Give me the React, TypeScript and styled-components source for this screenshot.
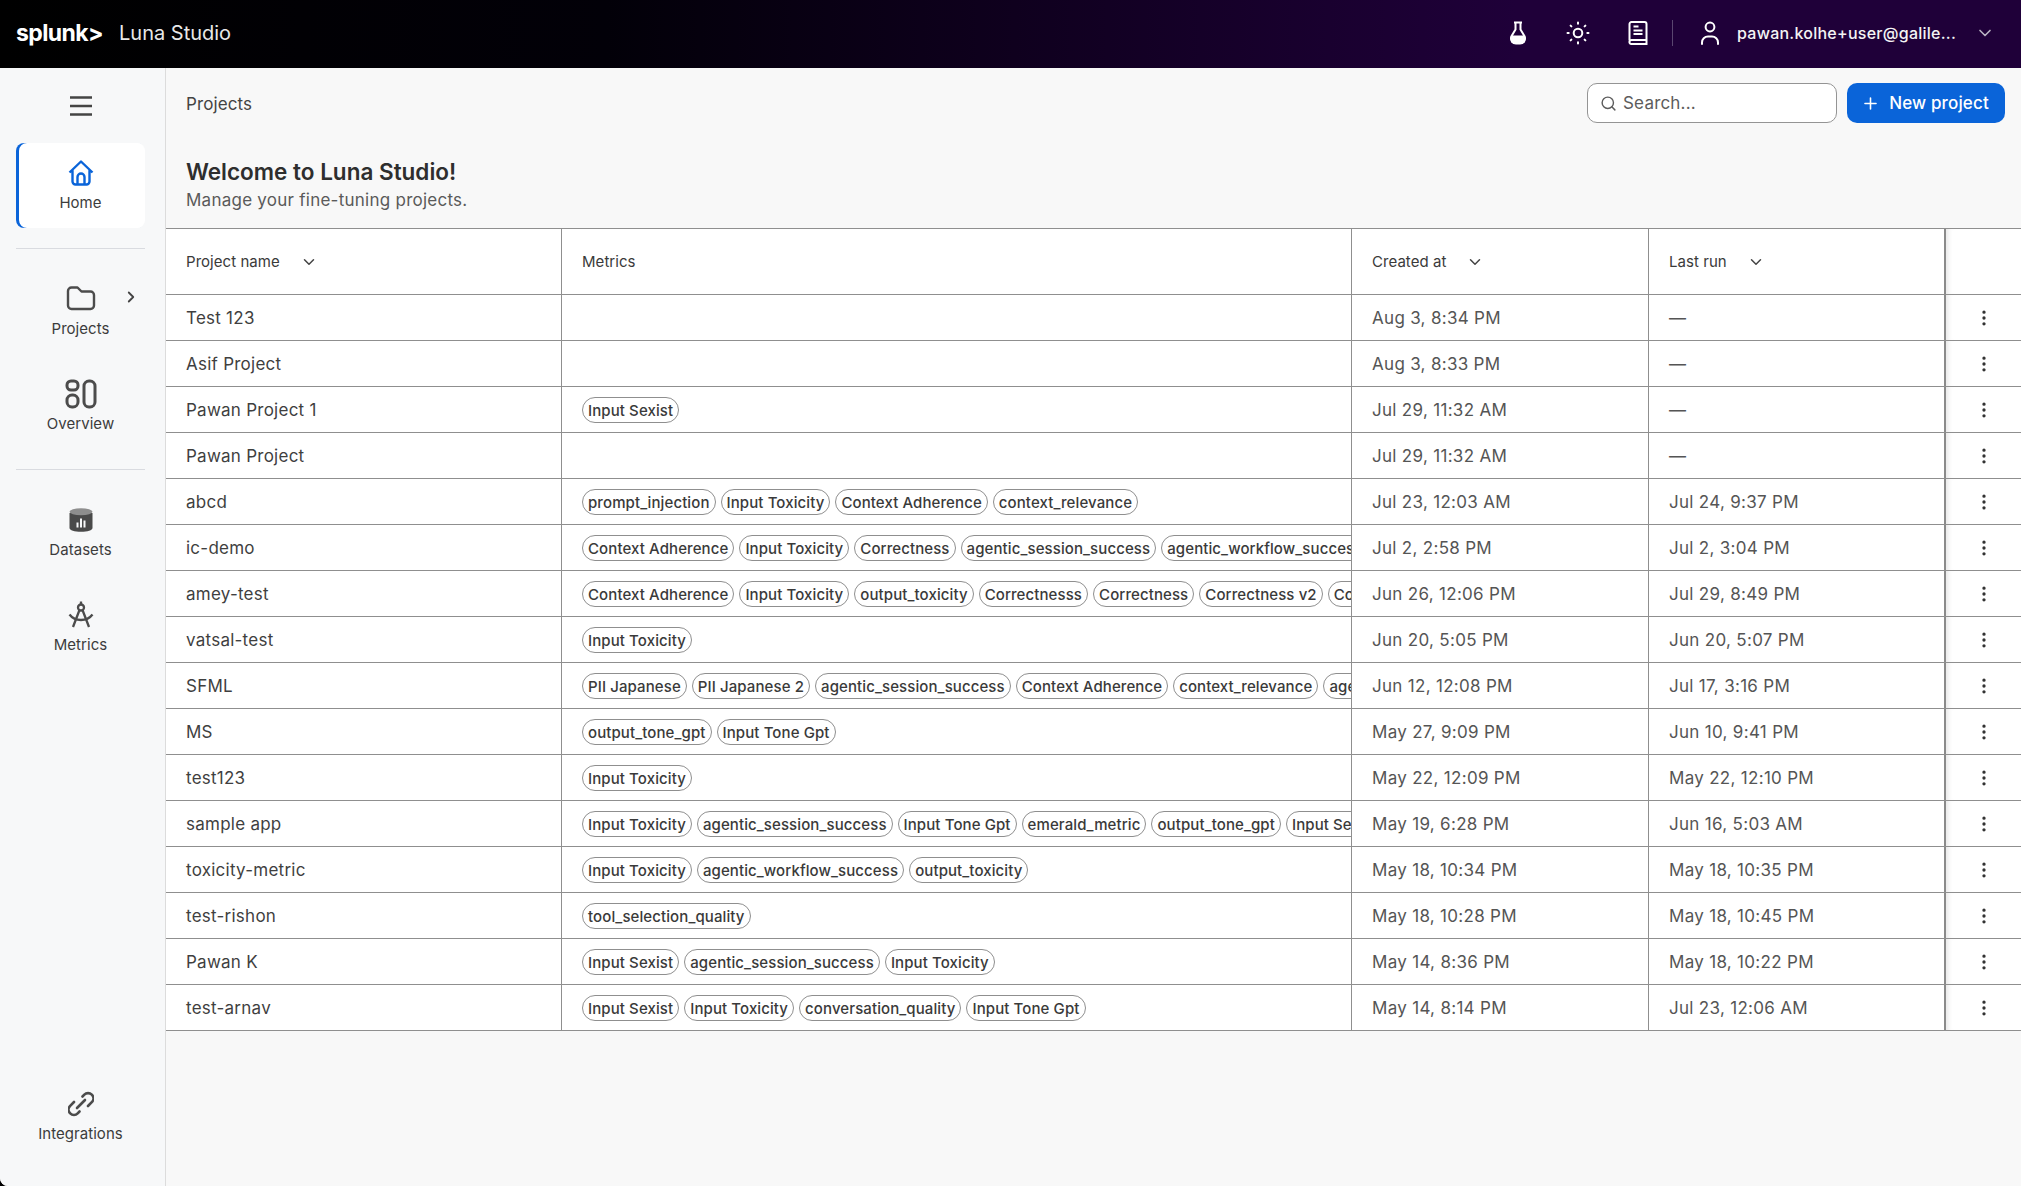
import styled, { createGlobalStyle } from 'styled-components';
import { ChevronDown, ChevronRight, EllipsisVertical, Plus, Search } from 'lucide-react';

type Row = { name: string; metrics: string[]; created: string; lastRun: string };

const rows: Row[] = [
  { name: 'Test 123', metrics: [], created: 'Aug 3, 8:34 PM', lastRun: '—' },
  { name: 'Asif Project', metrics: [], created: 'Aug 3, 8:33 PM', lastRun: '—' },
  { name: 'Pawan Project 1', metrics: ['Input Sexist'], created: 'Jul 29, 11:32 AM', lastRun: '—' },
  { name: 'Pawan Project', metrics: [], created: 'Jul 29, 11:32 AM', lastRun: '—' },
  {
    name: 'abcd',
    metrics: ['prompt_injection', 'Input Toxicity', 'Context Adherence', 'context_relevance'],
    created: 'Jul 23, 12:03 AM',
    lastRun: 'Jul 24, 9:37 PM',
  },
  {
    name: 'ic-demo',
    metrics: ['Context Adherence', 'Input Toxicity', 'Correctness', 'agentic_session_success', 'agentic_workflow_success'],
    created: 'Jul 2, 2:58 PM',
    lastRun: 'Jul 2, 3:04 PM',
  },
  {
    name: 'amey-test',
    metrics: ['Context Adherence', 'Input Toxicity', 'output_toxicity', 'Correctnesss', 'Correctness', 'Correctness v2', 'Correctness v3'],
    created: 'Jun 26, 12:06 PM',
    lastRun: 'Jul 29, 8:49 PM',
  },
  { name: 'vatsal-test', metrics: ['Input Toxicity'], created: 'Jun 20, 5:05 PM', lastRun: 'Jun 20, 5:07 PM' },
  {
    name: 'SFML',
    metrics: ['PII Japanese', 'PII Japanese 2', 'agentic_session_success', 'Context Adherence', 'context_relevance', 'agentic_workflow_success'],
    created: 'Jun 12, 12:08 PM',
    lastRun: 'Jul 17, 3:16 PM',
  },
  { name: 'MS', metrics: ['output_tone_gpt', 'Input Tone Gpt'], created: 'May 27, 9:09 PM', lastRun: 'Jun 10, 9:41 PM' },
  { name: 'test123', metrics: ['Input Toxicity'], created: 'May 22, 12:09 PM', lastRun: 'May 22, 12:10 PM' },
  {
    name: 'sample app',
    metrics: ['Input Toxicity', 'agentic_session_success', 'Input Tone Gpt', 'emerald_metric', 'output_tone_gpt', 'Input Sexist'],
    created: 'May 19, 6:28 PM',
    lastRun: 'Jun 16, 5:03 AM',
  },
  {
    name: 'toxicity-metric',
    metrics: ['Input Toxicity', 'agentic_workflow_success', 'output_toxicity'],
    created: 'May 18, 10:34 PM',
    lastRun: 'May 18, 10:35 PM',
  },
  { name: 'test-rishon', metrics: ['tool_selection_quality'], created: 'May 18, 10:28 PM', lastRun: 'May 18, 10:45 PM' },
  {
    name: 'Pawan K',
    metrics: ['Input Sexist', 'agentic_session_success', 'Input Toxicity'],
    created: 'May 14, 8:36 PM',
    lastRun: 'May 18, 10:22 PM',
  },
  {
    name: 'test-arnav',
    metrics: ['Input Sexist', 'Input Toxicity', 'conversation_quality', 'Input Tone Gpt'],
    created: 'May 14, 8:14 PM',
    lastRun: 'Jul 23, 12:06 AM',
  },
];

const GlobalStyle = createGlobalStyle`
  html, body {
    margin: 0;
    padding: 0;
    height: 100%;
    overflow: hidden;
  }
  body {
    font-family: Inter, "Liberation Sans", sans-serif;
    background: #000;
    color: #333;
  }
  * {
    box-sizing: border-box;
  }
`;

const Shell = styled.div`
  display: flex;
  flex-direction: column;
  height: 100vh;
`;

const TopBar = styled.header`
  flex: 0 0 68px;
  display: flex;
  align-items: center;
  padding: 0 26px 2px 16px;
  background: linear-gradient(90deg, #000 0%, #020008 30%, #1f0039 75%, #1f0039 100%);
  color: #fff;
`;

const Logo = styled.span`
  font-size: 23px;
  font-weight: 700;
  letter-spacing: -0.6px;
  margin-right: 16px;
`;

const Product = styled.span`
  font-size: 20px;
  color: #e8e8e8;
  flex: 1;
`;

const BarIcon = styled.span`
  display: flex;
  width: 24px;
  height: 24px;
  margin-left: 36px;
  &:first-of-type {
    margin-left: 0;
  }
`;

const BarDivider = styled.span`
  width: 1px;
  height: 26px;
  margin: 0 25px 0 22px;
  background: #5a4670;
`;

const UserIcon = styled.span`
  display: flex;
  width: 24px;
  height: 24px;
  margin-right: 15px;
`;

const UserName = styled.span`
  font-size: 16px;
  font-weight: 500;
  letter-spacing: 0.25px;
  width: 238px;
  color: #f4f4f4;
`;

const Body = styled.div`
  flex: 1;
  display: flex;
  min-height: 0;
  background: #f8f8f8;
  border-bottom-left-radius: 8px;
`;

const Sidebar = styled.nav`
  flex: 0 0 166px;
  display: flex;
  flex-direction: column;
  padding: 0 20px 27px 16px;
  background: #f7f8f9;
  border-right: 1px solid #dcdcdc;
  border-bottom-left-radius: 8px;
`;

const Burger = styled.button`
  flex: 0 0 75px;
  display: flex;
  align-items: center;
  justify-content: center;
  padding: 0;
  border: 0;
  background: none;
`;

const NavItem = styled.a<{ $active?: boolean }>`
  position: relative;
  flex: 0 0 85px;
  display: flex;
  flex-direction: column;
  align-items: center;
  justify-content: center;
  gap: 5px;
  margin-bottom: 10px;
  padding-bottom: 2px;
  border-radius: 8px;
  color: ${(p) => (p.$active ? '#0a64d9' : '#4c4c4c')};
  background: ${(p) => (p.$active ? '#fff' : 'transparent')};
  box-shadow: ${(p) => (p.$active ? 'inset 3px 0 0 #0a64d9' : 'none')};
`;

const BottomItem = styled(NavItem)`
  margin: auto 0 0;
`;

const NavLabel = styled.span`
  font-size: 15px;
  line-height: 19px;
  letter-spacing: 0.05px;
  color: #3c3c3c;
`;

const NavIcon = styled.span`
  display: flex;
  align-items: center;
  justify-content: center;
  height: 30px;
`;

const Expand = styled.span`
  position: absolute;
  top: 19px;
  right: 5px;
  display: flex;
  color: #444;
`;

const Divider = styled.hr`
  flex: 0 0 1px;
  width: 100%;
  margin: 10px 0 20px;
  border: 0;
  background: #d9dbe0;
`;

const Main = styled.main`
  flex: 1;
  min-width: 0;
`;

const Toolbar = styled.div`
  display: flex;
  align-items: center;
  height: 70px;
  padding: 0 16px 0 20px;
`;

const Crumb = styled.span`
  flex: 1;
  padding-top: 1px;
  font-size: 17px;
  letter-spacing: 0.1px;
  color: #444;
`;

const SearchBox = styled.div`
  display: flex;
  align-items: center;
  gap: 6px;
  width: 250px;
  height: 40px;
  margin-right: 10px;
  padding: 0 12px;
  font-size: 17px;
  letter-spacing: 0.2px;
  color: #5c5c5c;
  background: #fff;
  border: 1px solid #949494;
  border-radius: 10px;
`;

const NewButton = styled.button`
  display: flex;
  align-items: center;
  justify-content: center;
  gap: 9px;
  width: 158px;
  height: 40px;
  padding: 0 2px 0 0;
  font: 500 17px Inter, sans-serif;
  letter-spacing: 0.15px;
  color: #fff;
  background: #0a64d9;
  border: 0;
  border-radius: 10px;
`;

const Heading = styled.div`
  height: 90px;
  padding: 20px 20px 0;
`;

const Title = styled.h1`
  margin: 0;
  font-size: 22.5px;
  line-height: 28px;
  font-weight: 600;
  color: #2e2e2e;
`;

const Subtitle = styled.p`
  margin: 2px 0 0;
  font-size: 17px;
  line-height: 24px;
  letter-spacing: 0.25px;
  color: #5a5a5a;
`;

const Table = styled.div`
  border-top: 1px solid #8f8f8f;
  background: #fff;
`;

const TableRow = styled.div<{ $head?: boolean }>`
  display: grid;
  grid-template-columns: 395px 790px 297px 296px 77px;
  height: ${(p) => (p.$head ? '66px' : '46px')};
  border-bottom: 1px solid #8f8f8f;
`;

const Cell = styled.div`
  display: flex;
  align-items: center;
  min-width: 0;
  overflow: hidden;
  padding: 0 20px;
  font-size: 17px;
  letter-spacing: 0.25px;
  color: #3f3f3f;
  & + & {
    border-left: 1px solid #8f8f8f;
  }
`;

const DateCell = styled(Cell)`
  letter-spacing: 0.3px;
  color: #555;
`;

const HeadLabel = styled.span`
  font-size: 15px;
  letter-spacing: 0.05px;
  color: #3a3a3a;
`;

const SortIcon = styled.span`
  display: flex;
  margin-left: 20px;
  color: #444;
`;

const ActionCell = styled(Cell)`
  justify-content: center;
  padding: 0;
  color: #333;
  && {
    border-left: 2px solid #8a8a8a;
  }
  box-shadow: inset 6px 0 5px -4px rgba(0, 0, 0, 0.1);
`;

const ChipRow = styled.div`
  display: flex;
  gap: 5px;
  padding-top: 1px;
`;

const Chip = styled.span`
  flex: none;
  display: flex;
  align-items: center;
  height: 26px;
  padding: 0 5px;
  font-size: 15px;
  font-weight: 500;
  letter-spacing: 0.1px;
  color: #3a3a3a;
  background: #fff;
  border: 1px solid #8f8f8f;
  border-radius: 13px;
`;

function FlaskIcon() {
  return (
    <svg width="24" height="24" viewBox="0 0 24 24" fill="none" stroke="currentColor" strokeWidth="2">
      <path d="M8 1.5h8M9.5 2v6.5L5.6 15a5.2 5.2 0 0 0 4.4 7.5h4a5.2 5.2 0 0 0 4.4-7.5L14.5 8.5V2" />
      <path d="M5 14.5h14l.8 3-1 4-2.8 1.5H8l-2.8-1.5-1-4z" fill="currentColor" stroke="none" />
    </svg>
  );
}

function SunIcon() {
  return (
    <svg width="24" height="24" viewBox="0 0 24 24" fill="none" stroke="currentColor" strokeWidth="2" strokeLinecap="round">
      <circle cx="12" cy="12" r="4.3" />
      <path d="M12 1.5v1.2M12 21.3v1.2M1.5 12h1.2M21.3 12h1.2M4.6 4.6l.8.8M18.6 18.6l.8.8M4.6 19.4l.8-.8M18.6 5.4l.8-.8" />
    </svg>
  );
}

function BookIcon() {
  return (
    <svg width="24" height="24" viewBox="0 0 24 24" fill="none" stroke="currentColor" strokeWidth="2">
      <path d="M3.500 19.500V3a2 2 0 0 1 2-2h13a2 2 0 0 1 2 2v20H5.500a2 2 0 0 1-2-2.500 2 2 0 0 1 2-1.500h15" />
      <path d="M7.500 5.500h5M7.500 9.500h9M7.500 13h9" strokeWidth="1.8" />
    </svg>
  );
}

function PersonIcon() {
  return (
    <svg width="24" height="24" viewBox="0 0 24 24" fill="none" stroke="currentColor" strokeWidth="2" strokeLinecap="round">
      <circle cx="12" cy="6" r="4.4" />
      <path d="M4 23v-1.5a6 6 0 0 1 6-6h4a6 6 0 0 1 6 6V23" />
    </svg>
  );
}

function BurgerIcon() {
  return (
    <svg width="24" height="20" viewBox="0 0 24 20" fill="none" stroke="#444" strokeWidth="2.6">
      <path d="M1 1.500h22M1 10h22M1 18.500h22" />
    </svg>
  );
}

function HomeIcon() {
  return (
    <svg width="26" height="26" viewBox="0 0 26 26" fill="none" stroke="currentColor" strokeWidth="2.4" strokeLinejoin="round">
      <path d="M1.500 12.500 13 1.500l11.500 11M4.500 10v11.500a3 3 0 0 0 3 3h11a3 3 0 0 0 3-3V10" />
      <path d="M9.500 24.500V17a3.500 3.500 0 0 1 7 0v7.500" />
    </svg>
  );
}

function FolderIcon() {
  return (
    <svg width="30" height="25" viewBox="0 0 30 25" fill="none" stroke="currentColor" strokeWidth="2.4" strokeLinejoin="round">
      <path d="M2 5a3.500 3.500 0 0 1 3.500-3.500h6l4 4H24.500A3.500 3.500 0 0 1 28 9v10.500a3.500 3.500 0 0 1-3.500 3.500h-19A3.500 3.500 0 0 1 2 19.500z" />
    </svg>
  );
}

function OverviewIcon() {
  return (
    <svg width="32" height="30" viewBox="0 0 32 30" fill="none" stroke="currentColor" strokeWidth="3">
      <rect x="2" y="2" width="11" height="9" rx="4" />
      <rect x="2" y="16" width="11" height="12" rx="5" />
      <rect x="19" y="2" width="11" height="26" rx="5" />
    </svg>
  );
}

function DatasetIcon() {
  return (
    <svg width="24" height="24" viewBox="0 0 24 24">
      <path d="M0.500 5v15c0 2.200 5 3.800 11.500 3.800S23.500 22.200 23.500 20V5z" fill="#4a4a4a" />
      <ellipse cx="12" cy="3.800" rx="11.500" ry="3.500" fill="#8e8e8e" />
      <path d="M7.500 14.500h2v5h-2zM11 10.500h2v9h-2zM14.500 12.500h2v7h-2z" fill="#f7f8f9" />
    </svg>
  );
}

function CompassIcon() {
  return (
    <svg width="26" height="27" viewBox="0 0 26 27" fill="none" stroke="currentColor" strokeWidth="2.3">
      <path d="M13 0.500v3" />
      <circle cx="13" cy="6.500" r="3" />
      <path d="M11.500 9 5 26M14.500 9 21 26" />
      <path d="M1.500 13.500c3 4 6.500 5.500 11.500 5.500s8.500-1.500 11.500-5.500" />
    </svg>
  );
}

function LinkIcon() {
  return (
    <svg width="26" height="26" viewBox="0 0 26 26" fill="none" stroke="currentColor" strokeWidth="2.600" strokeLinecap="round">
      <path d="M14.500 5.500l1.800-1.800a5.300 5.300 0 0 1 7.500 7.500L20 15" />
      <path d="M11.500 20.500l-1.800 1.800a5.300 5.300 0 0 1-7.500-7.500L6 11" />
      <path d="M9 17l8-8" />
    </svg>
  );
}

export default function App() {
  return (
    <Shell>
      <GlobalStyle />
      <TopBar>
        <Logo>splunk&gt;</Logo>
        <Product>Luna Studio</Product>
        <BarIcon>
          <FlaskIcon />
        </BarIcon>
        <BarIcon>
          <SunIcon />
        </BarIcon>
        <BarIcon>
          <BookIcon />
        </BarIcon>
        <BarDivider />
        <UserIcon>
          <PersonIcon />
        </UserIcon>
        <UserName>pawan.kolhe+user@galile...</UserName>
        <ChevronDown size={20} color="#b9b2c2" />
      </TopBar>
      <Body>
        <Sidebar>
          <Burger>
            <BurgerIcon />
          </Burger>
          <NavItem $active>
            <NavIcon>
              <HomeIcon />
            </NavIcon>
            <NavLabel>Home</NavLabel>
          </NavItem>
          <Divider />
          <NavItem>
            <NavIcon>
              <FolderIcon />
            </NavIcon>
            <NavLabel>Projects</NavLabel>
            <Expand>
              <ChevronRight size={18} strokeWidth={2.4} />
            </Expand>
          </NavItem>
          <NavItem>
            <NavIcon>
              <OverviewIcon />
            </NavIcon>
            <NavLabel>Overview</NavLabel>
          </NavItem>
          <Divider />
          <NavItem>
            <NavIcon>
              <DatasetIcon />
            </NavIcon>
            <NavLabel>Datasets</NavLabel>
          </NavItem>
          <NavItem>
            <NavIcon>
              <CompassIcon />
            </NavIcon>
            <NavLabel>Metrics</NavLabel>
          </NavItem>
          <BottomItem>
            <NavIcon>
              <LinkIcon />
            </NavIcon>
            <NavLabel>Integrations</NavLabel>
          </BottomItem>
        </Sidebar>
        <Main>
          <Toolbar>
            <Crumb>Projects</Crumb>
            <SearchBox>
              <Search size={17} />
              Search...
            </SearchBox>
            <NewButton>
              <Plus size={19} />
              New project
            </NewButton>
          </Toolbar>
          <Heading>
            <Title>Welcome to Luna Studio!</Title>
            <Subtitle>Manage your fine-tuning projects.</Subtitle>
          </Heading>
          <Table>
            <TableRow $head>
              <Cell>
                <HeadLabel>Project name</HeadLabel>
                <SortIcon>
                  <ChevronDown size={18} />
                </SortIcon>
              </Cell>
              <Cell>
                <HeadLabel>Metrics</HeadLabel>
              </Cell>
              <Cell>
                <HeadLabel>Created at</HeadLabel>
                <SortIcon>
                  <ChevronDown size={18} />
                </SortIcon>
              </Cell>
              <Cell>
                <HeadLabel>Last run</HeadLabel>
                <SortIcon>
                  <ChevronDown size={18} />
                </SortIcon>
              </Cell>
              <ActionCell />
            </TableRow>
            {rows.map((row) => (
              <TableRow key={row.name}>
                <Cell>{row.name}</Cell>
                <Cell>
                  <ChipRow>
                    {row.metrics.map((m) => (
                      <Chip key={m}>{m}</Chip>
                    ))}
                  </ChipRow>
                </Cell>
                <DateCell>{row.created}</DateCell>
                <DateCell>{row.lastRun}</DateCell>
                <ActionCell>
                  <EllipsisVertical size={20} />
                </ActionCell>
              </TableRow>
            ))}
          </Table>
        </Main>
      </Body>
    </Shell>
  );
}
